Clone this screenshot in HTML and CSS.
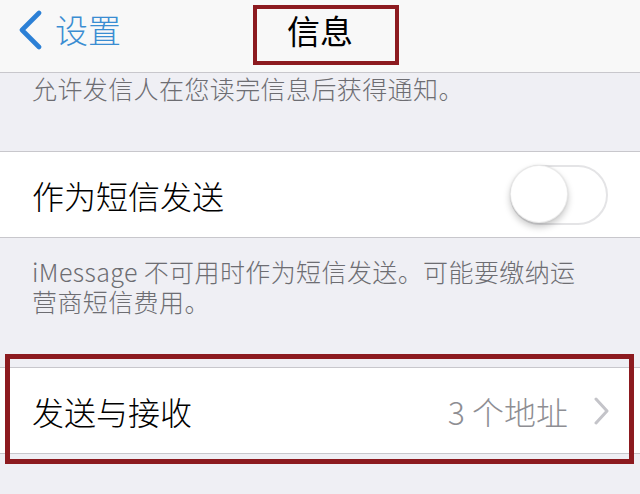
FILE: index.html
```html
<!DOCTYPE html>
<html lang="zh">
<head>
<meta charset="utf-8">
<title>信息</title>
<link rel="stylesheet" href="styles.css">
</head>
<body>
<div class="screen">
  <header class="nav">
    <div class="back">
      <svg class="back-icon" width="26" height="40" viewBox="0 0 26 40"><polyline points="22,3 5,20 22,37" fill="none" stroke="#2c80d6" stroke-width="4.6" stroke-linecap="round" stroke-linejoin="round"/></svg>
      <span class="back-text">设置</span>
    </div>
    <div class="title">信息</div>
    <div class="mark mark-title"></div>
  </header>

  <div class="note note-top">允许发信人在您读完信息后获得通知。</div>

  <div class="group">
    <div class="row">
      <span class="label">作为短信发送</span>
      <span class="switch"><span class="knob"></span></span>
    </div>
  </div>

  <div class="note note-mid">
    <span class="note-line">iMessage 不可用时作为短信发送。可能要缴纳运</span>
    <span class="note-line">营商短信费用。</span>
  </div>

  <div class="marked">
    <div class="group">
      <div class="row">
        <span class="label">发送与接收</span>
        <span class="detail">
          <span class="value">3 个地址</span>
          <svg class="chev" width="16" height="28" viewBox="0 0 16 28"><polyline points="3,2 14,14 3,26" fill="none" stroke="#c4c4c9" stroke-width="3" stroke-linecap="round" stroke-linejoin="round"/></svg>
        </span>
      </div>
    </div>
    <div class="mark mark-row"></div>
  </div>
</div>
</body>
</html>
```

FILE: styles.css
```css
html, body {
  margin: 0;
  padding: 0;
}
body {
  width: 640px;
  height: 494px;
  overflow: hidden;
  background: #efeff4;
  font-family: "Noto Sans CJK SC", "Noto Sans", sans-serif;
  font-weight: 300;
}
.screen {
  width: 640px;
  height: 494px;
  background: #efeff4;
}
.nav {
  position: relative;
  height: 73px;
  background: #f8f8f8;
  border-bottom: 1px solid #c8c7cc;
  box-sizing: border-box;
  display: flex;
  align-items: center;
  justify-content: center;
}
.back {
  position: absolute;
  left: 17px;
  top: 10px;
  display: flex;
  align-items: center;
  gap: 12px;
}
.back-icon {
  display: block;
}
.back-text {
  font-size: 33px;
  line-height: 40px;
  color: #3a8dd2;
  margin-top: -2px;
}
.title {
  font-size: 33px;
  line-height: 40px;
  color: #000;
  font-weight: 400;
  margin-top: -13px;
}
.mark {
  position: absolute;
  border: 4px solid #8c1a1f;
  box-sizing: border-box;
  pointer-events: none;
}
.mark-title {
  left: 253px;
  top: 5px;
  width: 146px;
  height: 60px;
}
.note {
  color: #6d6d72;
  font-size: 25px;
  line-height: 31px;
  padding-left: 32px;
  letter-spacing: 0.4px;
}
.note-top {
  height: 78px;
  padding-top: 0;
  box-sizing: border-box;
}
.note-mid {
  height: 116px;
  padding-top: 18px;
  box-sizing: border-box;
}
.note-line {
  display: block;
  height: 30px;
  line-height: 30px;
}
.group {
  background: #fff;
  border-top: 1px solid #c8c7cc;
  border-bottom: 1px solid #c8c7cc;
}
.row {
  height: 85px;
  display: flex;
  align-items: center;
  justify-content: space-between;
  padding: 0 32px;
}
.label {
  font-size: 32px;
  color: #000;
  line-height: 40px;
}
.switch {
  position: relative;
  width: 98px;
  height: 60px;
  border: 2px solid #e4e4e6;
  border-radius: 30px;
  box-sizing: border-box;
  background: #fff;
  flex-shrink: 0;
}
.knob {
  position: absolute;
  left: -2px;
  top: -2px;
  width: 58px;
  height: 58px;
  border-radius: 50%;
  background: #fff;
  border: 1px solid rgba(0,0,0,0.08);
  box-sizing: border-box;
  box-shadow: 0 4px 7px rgba(0,0,0,0.22), 0 0 2px rgba(0,0,0,0.1);
}
.marked {
  position: relative;
  padding-top: 13px;
  padding-bottom: 10px;
}
.detail {
  display: flex;
  align-items: center;
  gap: 25px;
  margin-right: -1px;
}
.value {
  font-size: 32px;
  color: #8e8e93;
  line-height: 40px;
}
.chev {
  display: block;
}
.mark-row {
  left: 5px;
  top: 0;
  width: 629px;
  height: 110px;
  border-width: 5px;
}
```
